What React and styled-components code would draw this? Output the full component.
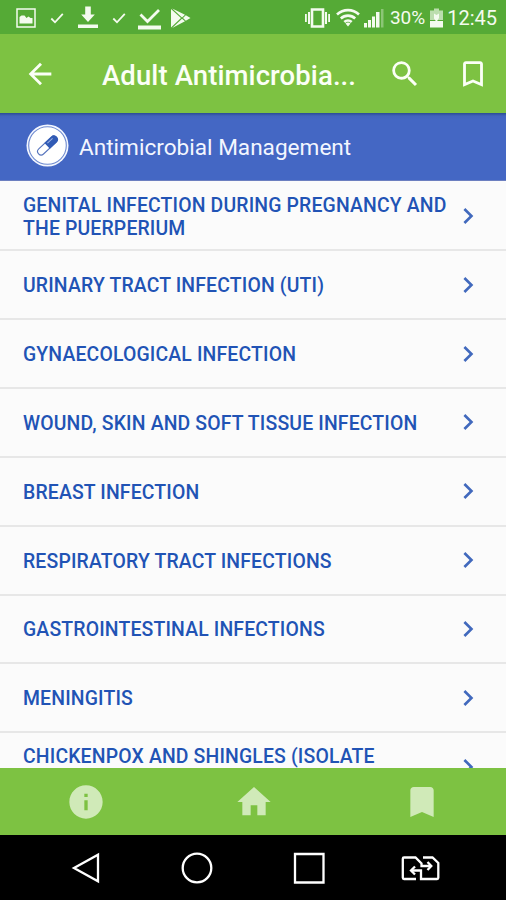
import styled, { createGlobalStyle } from "styled-components";

const GlobalStyle = createGlobalStyle`
  * {
    box-sizing: border-box;
  }
  body {
    margin: 0;
    font-family: Roboto, "Open Sans", sans-serif;
  }
  svg {
    display: block;
    flex-shrink: 0;
  }
`;

const Screen = styled.div`
  width: 506px;
  height: 900px;
  display: flex;
  flex-direction: column;
  overflow: hidden;
  background: #fbfbfb;
`;

const StatusBar = styled.div`
  height: 34px;
  flex-shrink: 0;
  display: flex;
  align-items: center;
  justify-content: space-between;
  padding: 1px 9px 0 16px;
  background: #55aa36;
  color: #f4fbef;
`;

const StatusGroup = styled.div`
  display: flex;
  align-items: center;
`;

const StatusIcon = styled.svg`
  width: ${({ $w }) => $w}px;
  height: 24px;
  margin-right: ${({ $gap }) => $gap}px;
  fill: currentColor;
`;

const StatusText = styled.span`
  font-size: ${({ $size }) => $size}px;
  line-height: 24px;
  margin-right: ${({ $gap }) => $gap || 0}px;
  padding-top: 1px;
`;

const AppBar = styled.header`
  height: 79px;
  flex-shrink: 0;
  display: flex;
  align-items: center;
  padding: 0 16px 0 23px;
  background: #7dc242;
  color: #fbfff6;
`;

const BarIcon = styled.svg`
  width: 34px;
  height: 34px;
  margin-left: ${({ $left }) => $left || 0}px;
  fill: currentColor;
`;

const Title = styled.h1`
  flex: 1;
  margin: 4px 0 0 45px;
  font-size: 27.5px;
  line-height: 34px;
  font-weight: 500;
  letter-spacing: 0.1px;
  white-space: nowrap;
`;

const Banner = styled.div`
  height: 68px;
  flex-shrink: 0;
  display: flex;
  align-items: center;
  padding: 0 26px 2px;
  background: linear-gradient(#2b4c94 0, #4264bd 3px, #4467c4 7px);
  border-bottom: 1px solid #6c7fc0;
  color: #f3f6ff;
  font-size: 22.6px;
`;

const BannerLabel = styled.span`
  margin-left: 10px;
  padding-top: 3px;
`;

const List = styled.ul`
  flex: 1;
  min-height: 0;
  overflow: hidden;
  margin: 0;
  padding: 1.5px 0 0;
  list-style: none;
`;

const Row = styled.li`
  height: 68.85px;
  display: flex;
  align-items: center;
  justify-content: space-between;
  padding: 0 22.4px 0 23px;
  border-bottom: 2px solid #e7e7e7;
  color: #2153b5;
`;

const RowLabel = styled.span`
  min-height: ${({ $tall }) => ($tall ? 48 : 0)}px;
  padding-top: 2px;
  font-size: 19.4px;
  line-height: 23px;
  font-weight: 500;
  letter-spacing: 0.16px;
  white-space: pre-line;
`;

const Chevron = styled.svg`
  width: 32px;
  height: 32px;
  fill: #4169bd;
`;

const TabBar = styled.nav`
  height: 67px;
  flex-shrink: 0;
  display: grid;
  grid-template-columns: repeat(3, 1fr);
  place-items: center;
  padding-left: 2px;
  background: #7dc242;
`;

const TabIcon = styled.svg`
  width: 40px;
  height: 40px;
  fill: #d0eab8;
`;

const SystemNav = styled.div`
  height: 65px;
  flex-shrink: 0;
  display: grid;
  grid-template-columns: repeat(4, 1fr);
  place-items: center;
  padding: 1px 30px 0;
  background: #000;
`;

const NavIcon = styled.svg`
  width: 44px;
  height: 36px;
  fill: none;
  stroke: #fff;
  stroke-width: 2.3;
`;

const topics = [
  { label: "GENITAL INFECTION DURING PREGNANCY AND\nTHE PUERPERIUM" },
  { label: "URINARY TRACT INFECTION (UTI)" },
  { label: "GYNAECOLOGICAL INFECTION" },
  { label: "WOUND, SKIN AND SOFT TISSUE INFECTION" },
  { label: "BREAST INFECTION" },
  { label: "RESPIRATORY TRACT INFECTIONS" },
  { label: "GASTROINTESTINAL INFECTIONS" },
  { label: "MENINGITIS" },
  { label: "CHICKENPOX AND SHINGLES (ISOLATE", tall: true },
];

const SmallCheck = ({ gap }) => (
  <StatusIcon $w={14} $gap={gap} viewBox="0 0 14 24">
    <path d="M1.3 12.5 5 16.3 12.8 7.8" fill="none" stroke="currentColor" strokeWidth="1.8" />
  </StatusIcon>
);

const PillBadge = () => (
  <svg width="43" height="43" viewBox="0 0 43 43">
    <circle cx="21.5" cy="21.5" r="21" fill="#f4f7ff" />
    <circle cx="21.5" cy="21.5" r="18.8" fill="#fff" stroke="#6f8bd0" strokeWidth="1.1" />
    <g transform="rotate(-43 21.5 21.5)">
      <rect x="9.3" y="18" width="24.4" height="7" rx="3.5" fill="#fff" stroke="#5674bd" strokeWidth="1.1" />
      <path d="M21 17.5h9.2a4 4 0 0 1 0 8H21z" fill="#315bb5" />
      <path d="M23 19.8h7" stroke="#9db3e4" strokeWidth="1" />
    </g>
  </svg>
);

const Status = () => (
  <StatusBar>
    <StatusGroup>
      <StatusIcon $w={20} $gap={14} viewBox="0 0 20 24">
        <path d="M1 3h18v18H1z" fill="none" stroke="currentColor" strokeWidth="1.5" />
        <path d="M3.5 17.5V11l2-1.500h3l2 2.500 2-1.500 2 1.500h2v5.500z" />
      </StatusIcon>
      <SmallCheck gap={14} />
      <StatusIcon $w={20} $gap={14} viewBox="0 0 20 24">
        <path d="M7.2.5h5.6v8h4L10 16 3.200 8.500h4zM0 18.500h20V22H0z" />
      </StatusIcon>
      <SmallCheck gap={12} />
      <StatusIcon $w={23} $gap={10} viewBox="0 0 23 24">
        <path d="M2.5 8.5 9.5 15.5 21 4" fill="none" stroke="currentColor" strokeWidth="2.8" />
        <path d="M0 19.500h23v4H0z" />
      </StatusIcon>
      <StatusIcon $w={20} $gap={0} viewBox="0 0 20 24">
        <path d="M0 3 10 12 0 21.5zM1.2 2.5 14 8.8 11 11.5zM1.2 22 14 15.2 11 12.7zM14.8 9.2 19.5 12 14.8 14.8 12 12z" />
      </StatusIcon>
    </StatusGroup>
    <StatusGroup>
      <StatusIcon $w={25} $gap={6} viewBox="0 0 25 24">
        <path d="M7 3.5h11v17H7z" fill="none" stroke="currentColor" strokeWidth="2.6" />
        <path d="M0 8h1.8v8H0zM3 6h2v12H3zM20 6h2v12h-2zM23.2 8H25v8h-1.8z" />
      </StatusIcon>
      <StatusIcon $w={24} $gap={4} viewBox="0 0 24 24">
        <g fill="none" stroke="currentColor" strokeWidth="2.6">
          <path d="M1 8.5a16 16 0 0 1 22 0" />
          <path d="M4.8 12.5a10.5 10.5 0 0 1 14.4 0" />
          <path d="M8.3 16a5.5 5.5 0 0 1 7.4 0" />
        </g>
        <path d="M9.5 17.5 12 20.5l2.5-3a4 4 0 0 0-5 0z" />
      </StatusIcon>
      <StatusIcon $w={20} $gap={6} viewBox="0 0 20 24">
        <path d="M0 17h3v4.5H0zM4 14h3v7.5H4zM8 10.5h3v11H8zM12 6h3.5v15.5H12z" />
        <path d="M17 3h2.5v18.5H17z" opacity=".35" />
      </StatusIcon>
      <StatusText $size={19} $gap={5}>30%</StatusText>
      <StatusIcon $w={13} $gap={4} viewBox="0 0 13 24">
        <path d="M4 2.5h5v2h4V14H0V4.500h4z" opacity=".65" />
        <path d="M0 15h13v6.500H0z" />
        <path d="M4 7.500 6.500 9l2.500-1.500v4.500l-2.500 4-2.500-3.500z" />
      </StatusIcon>
      <StatusText $size={20}>12:45</StatusText>
    </StatusGroup>
  </StatusBar>
);

const App = () => (
  <>
    <GlobalStyle />
    <Screen>
      <Status />
      <AppBar>
        <BarIcon viewBox="0 0 24 24">
          <path d="M20 11H7.83l5.59-5.59L12 4l-8 8 8 8 1.410-1.410L7.830 13H20v-2z" />
        </BarIcon>
        <Title>Adult Antimicrobia...</Title>
        <BarIcon viewBox="0 0 24 24">
          <path d="M15.5 14h-.79l-.28-.27A6.471 6.471 0 0 0 16 9.500 6.500 6.500 0 1 0 9.500 16c1.610 0 3.090-.590 4.230-1.570l.270.280v.790l5 4.990L20.490 19l-4.990-5zm-6 0C7.010 14 5 11.990 5 9.500S7.010 5 9.500 5 14 7.010 14 9.500 11.990 14 9.500 14z" />
        </BarIcon>
        <BarIcon $left={34} viewBox="0 0 24 24">
          <path d="M17 3H7c-1.1 0-1.99.9-1.99 2L5 21l7-3 7 3V5c0-1.1-.9-2-2-2zm0 15-5-2.18L7 18V5h10v13z" />
        </BarIcon>
      </AppBar>
      <Banner>
        <PillBadge />
        <BannerLabel>Antimicrobial Management</BannerLabel>
      </Banner>
      <List>
        {topics.map(({ label, tall }) => (
          <Row key={label}>
            <RowLabel $tall={tall}>{label}</RowLabel>
            <Chevron viewBox="0 0 24 24">
              <path d="M10 6 8.59 7.41 13.17 12l-4.58 4.59L10 18l6-6z" />
            </Chevron>
          </Row>
        ))}
      </List>
      <TabBar>
        <TabIcon viewBox="0 0 24 24">
          <path d="M12 2C6.48 2 2 6.48 2 12s4.48 10 10 10 10-4.48 10-10S17.52 2 12 2zm1 15h-2v-6h2v6zm0-8h-2V7h2v2z" />
        </TabIcon>
        <TabIcon viewBox="0 0 24 24">
          <path d="M10 20v-6h4v6h5v-8h3L12 3 2 12h3v8z" />
        </TabIcon>
        <TabIcon viewBox="0 0 24 24">
          <path d="M17 3H7c-1.1 0-1.99.9-1.99 2L5 21l7-3 7 3V5c0-1.1-.9-2-2-2z" />
        </TabIcon>
      </TabBar>
      <SystemNav>
        <NavIcon viewBox="0 0 44 36">
          <path d="M34 4.8v26.4L10 18z" />
        </NavIcon>
        <NavIcon viewBox="0 0 44 36">
          <circle cx="22" cy="18" r="14.3" />
        </NavIcon>
        <NavIcon viewBox="0 0 44 36">
          <path d="M8 4h28.5v28.5H8z" />
        </NavIcon>
        <NavIcon viewBox="0 0 44 36">
          <path d="M18 29H6a1.2 1.2 0 0 1-1.2-1.2V8.700A1.200 1.200 0 0 1 6 7.500h11.500l6 6V16H32" />
          <path d="M25 7.500h9.500L40.300 13v14.800a1.200 1.200 0 0 1-1.200 1.200H23v-8.500H14" />
          <path d="M29.500 12 33.300 16l-3.800 4M17 16.500l-4 4 4 4" />
        </NavIcon>
      </SystemNav>
    </Screen>
  </>
);

export default App;
